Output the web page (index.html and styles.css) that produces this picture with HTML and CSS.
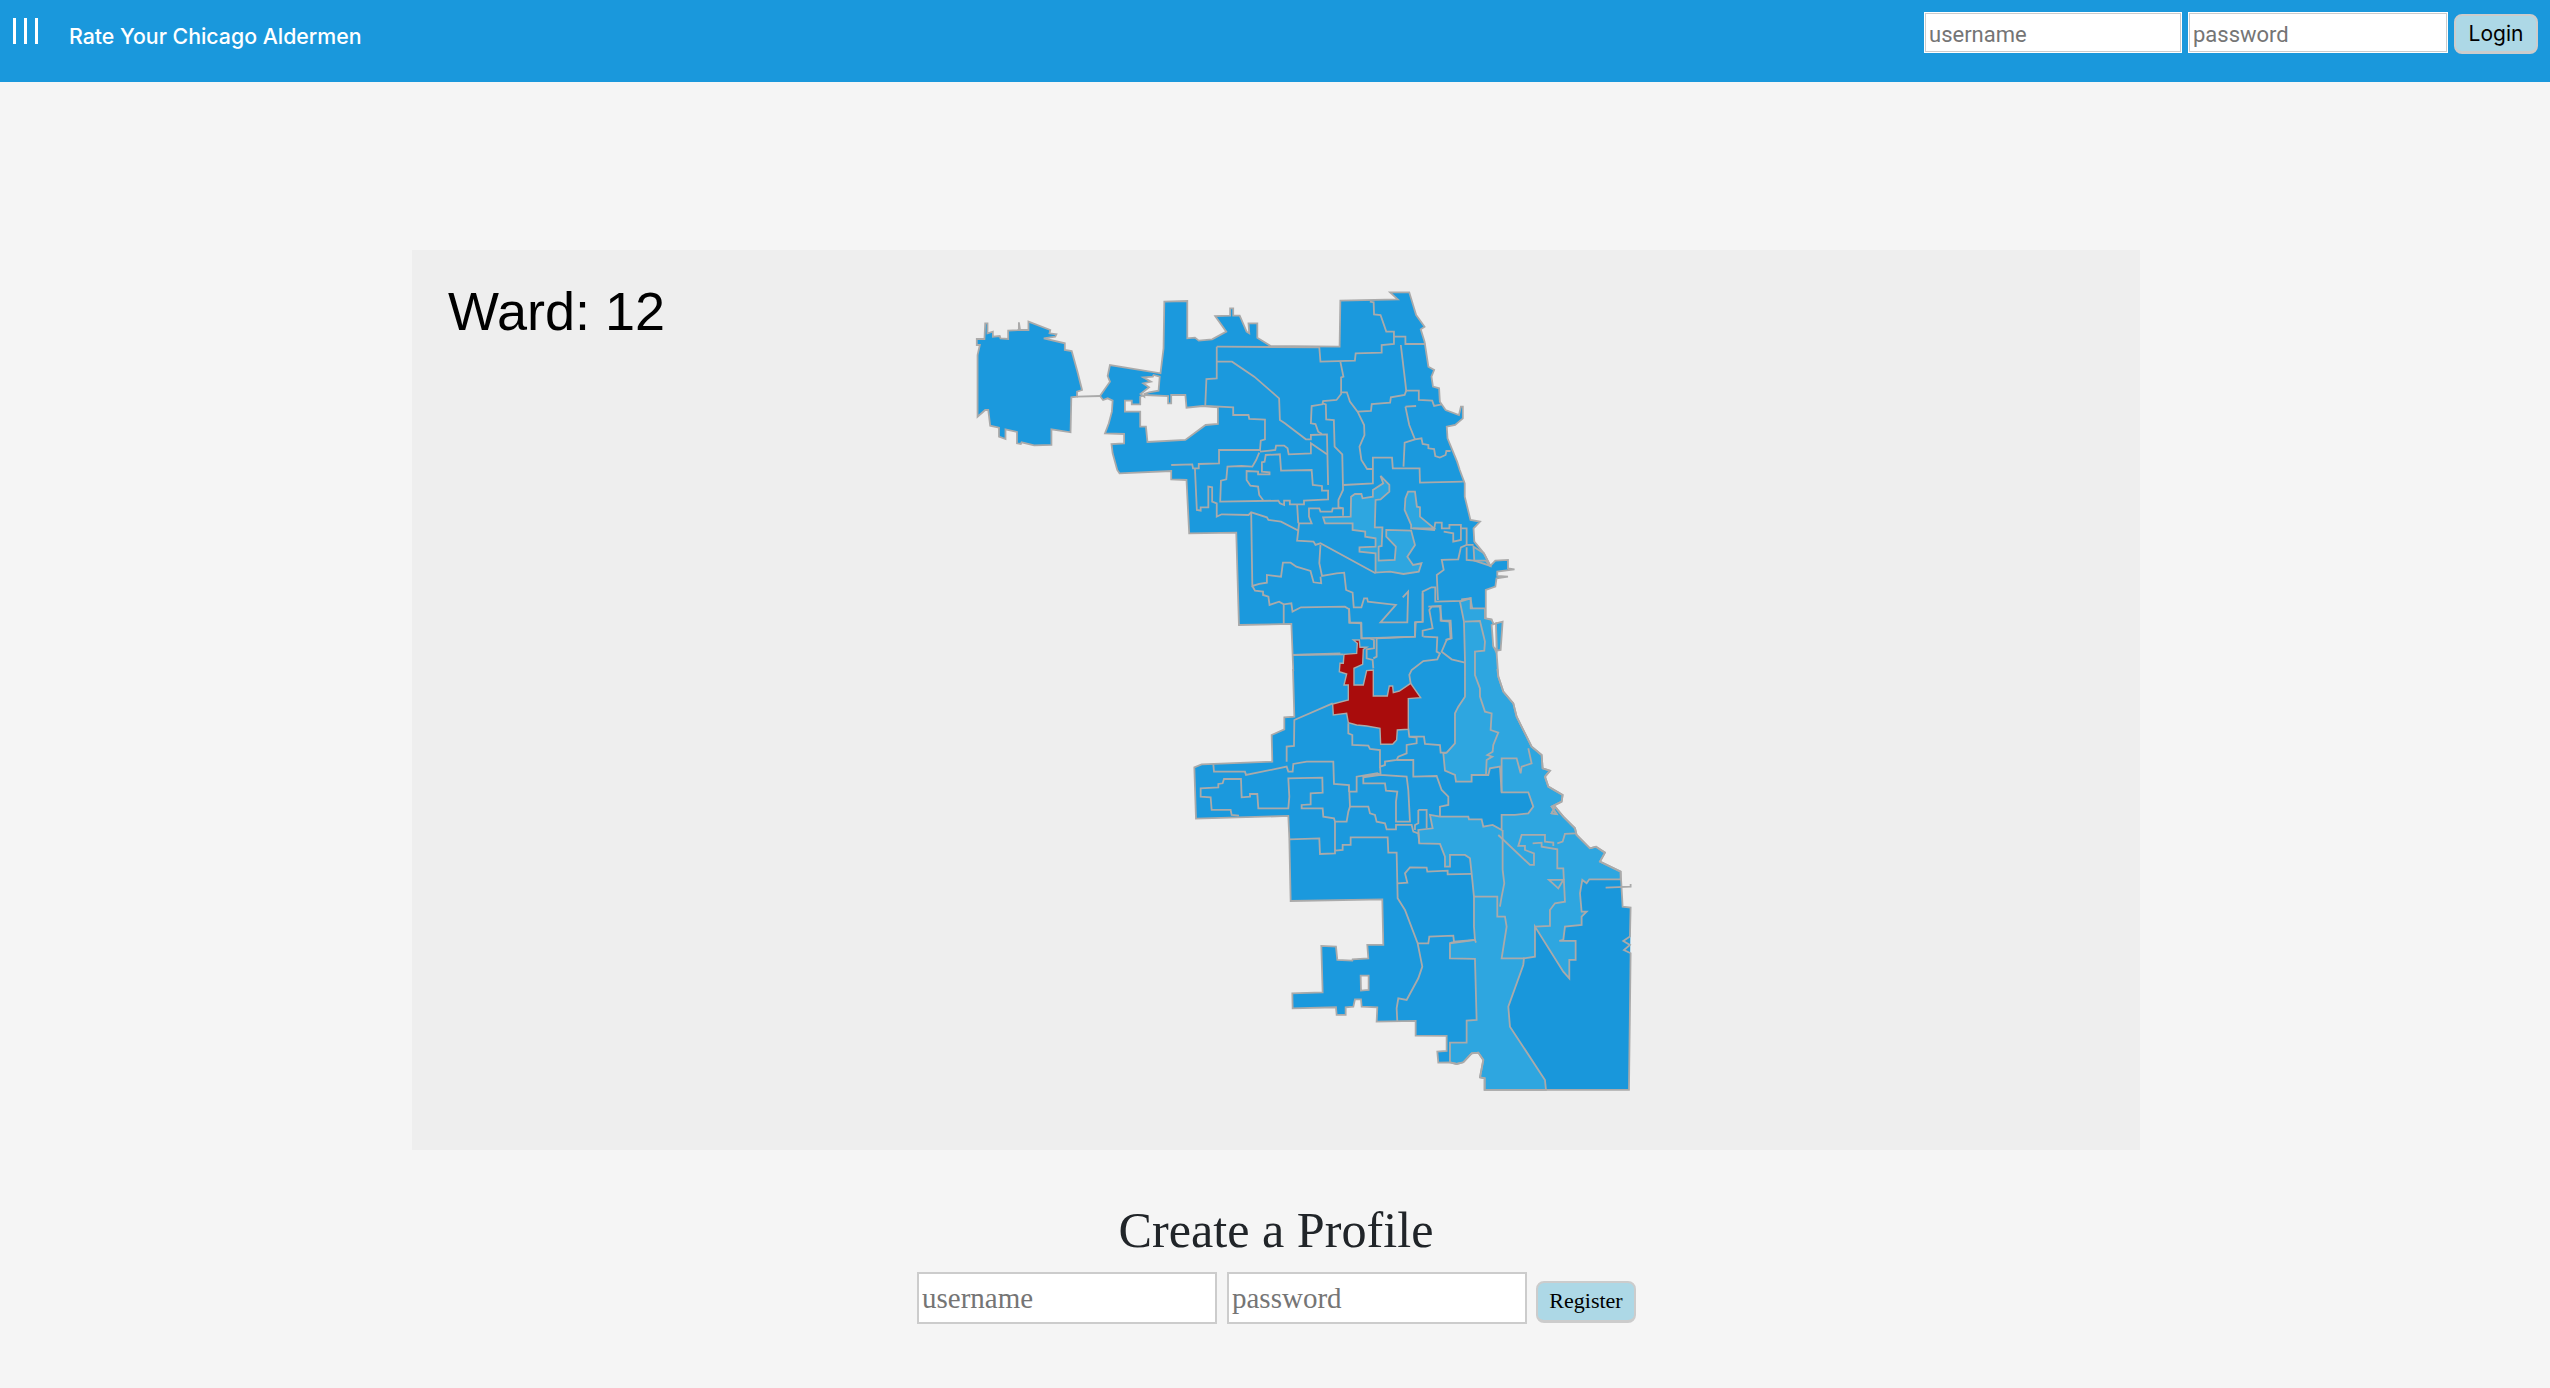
FILE: index.html
```html
<!DOCTYPE html>
<html lang="en">
<head>
    <meta charset="UTF-8">
    <title>Rate Your Chicago Aldermen</title>
    <link rel="stylesheet" href="styles.css">
</head>
<body>

<header class="topbar">
    <div class="brand">
        <div class="menu-icon"><span></span><span></span><span></span></div>
        <span class="brand-name">Rate Your Chicago Aldermen</span>
    </div>
    <form class="login">
        <input type="text" class="login-input" placeholder="username">
        <input type="password" class="login-input" placeholder="password">
        <button type="button" class="login-btn">Login</button>
    </form>
</header>

<main class="content">
    <section class="map-panel">
        <div class="ward-label">Ward: 12</div>
        <svg class="map" viewBox="412 250 1728 900" xmlns="http://www.w3.org/2000/svg">
            <defs>
                <path id="ohare" d="M72 440L72 255L78 225L70 225L70 207L90 207L92 160L98 160L98 190L112 185L112 200L130 198L132 205L152 207L152 182L180 180L180 157L183 180L205 180L205 155L262 180L260 190L278 193L275 200L245 205L300 220L300 240L318 243L333 305L345 360L332 365L332 380L317 382L315 487L265 478L265 525L220 526L187 517L185 522L175 520L175 486L145 478L145 507L128 500L128 473L105 467L100 420L92 420Z"/>
                <path id="north-edge" d="M897 1203L892 1062L755 1065L748 788L625 790L618 630L578 628L578 603L443 610L437 600L425 550L422 522L455 520L455 492L405 490L415 460L423 425L425 392L412 385L400 390L392 378L418 335L412 318L418 285L550 310L558 235L560 95L620 93L620 205L640 203L650 212L685 208L722 185L693 138L732 137L732 115L740 115L740 137L757 137L775 185L782 190L780 160L803 160L803 203L838 228L1018 230L1020 92L1170 88L1150 67L1200 67L1218 135L1240 170L1230 178L1240 215L1250 290L1265 300L1258 320L1262 350L1278 355L1280 395L1295 420L1330 435L1335 410L1340 410L1340 445L1320 465L1298 470L1300 505L1325 575L1332 600L1345 640L1345 680L1360 750L1385 755L1368 775L1370 815L1395 850L1412 888L1425 872L1458 870L1458 895L1475 898L1430 905L1430 918L1458 920L1428 925L1425 950L1400 960L1400 1045L1415 1048L1420 1070L1425 1140L1430 1203"/>
                <path id="south-edge" d="M429 327L433 470L403 472L403 508L365 525L367 605L155 613L133 622L138 776L415 768L418 835L422 1023L697 1018L700 1155L652 1155L655 1195L608 1198L607 1202L562 1200L558 1160L514 1158L518 1297L427 1300L428 1345L558 1342L560 1365L587 1365L587 1342L610 1340L615 1318L633 1318L635 1340L682 1342L680 1385L797 1383L797 1427L890 1428L890 1473L862 1475L865 1508L900 1507L920 1512L940 1507L965 1480L985 1478L1000 1500L990 1552L1004 1555L1004 1590L1437 1590L1442 1180L1422 1170L1440 1155L1420 1143L1440 1130L1442 1043L1418 1040L1412 935L1350 905L1365 878L1338 860L1320 865L1280 825L1275 805L1240 770L1215 740L1205 760L1220 762L1205 740L1235 725L1238 705L1195 680L1185 650L1200 632L1178 625L1175 585L1145 560L1130 530L1100 470L1090 430L1060 395L1045 350L1042 327"/>
            </defs>

            <!-- land fills -->
            <g transform="translate(950 270) scale(.3827 .3333)">
                <use href="#ohare" class="land"/>
                <use href="#north-edge" class="land"/>
            </g>
            <g transform="translate(1150 560) scale(.3333)">
                <use href="#south-edge" class="land"/>
                <path class="land-deep" d="M1160 1100L1240 1235L1258 1255L1258 1200L1277 1200L1277 1143L1228 1143L1240 1140L1245 1100L1295 1070L1295 1000L1297 960L1318 958L1412 958L1418 1040L1442 1043L1437 1590L1188 1590L1185 1560L1080 1400L1075 1340L1120 1215L1155 1190Z"/>
                <path class="land-deep" d="M860 650L885 632L915 645L918 665L965 665L965 645L1015 645L1020 625L1050 620L1055 697L1135 697L1150 740L1135 760L1095 765L1055 765L1055 800L1030 795L1000 800L995 775L955 770L870 770L870 740L895 735L895 710L875 690Z"/>
                <path class="land-deep" d="M743 970L772 968L765 940L780 922L830 923L832 935L893 932L893 943L965 942L972 1130L912 1145L910 1127L838 1130L835 1150L803 1150L765 1050L743 1015Z"/>
            </g>

            <!-- north side wards -->
            <g transform="translate(950 270) scale(.3827 .3333)">
                <path class="light" d="M1125 618L1148 645L1148 665L1125 688L1112 690L1110 772L1130 772L1128 828L1120 830L1120 872L1162 870L1165 830L1140 800L1140 780L1205 782L1215 825L1195 860L1210 885L1232 880L1225 905L1185 912L1150 905L1112 908L1112 850L1070 845L1070 832L1112 830L1112 805L1085 800L1085 785L1052 780L1052 760L980 760L975 742L1047 740L1048 680L1058 672L1075 672L1078 685L1105 680L1105 660L1132 640Z"/>
                <path class="light" d="M1190 685L1197 665L1215 665L1220 710L1228 712L1228 740L1265 775L1205 775L1205 765L1188 720Z"/>
                <path class="light" d="M1368 830L1395 850L1412 888L1370 872Z"/>
                <path class="hole" d="M457 425L457 392L475 392L475 403L497 403L497 380L510 375L570 378L570 400L578 400L578 375L615 375L618 413L660 408L700 412L700 462L668 465L615 510L516 516L512 470L497 470L497 425Z"/>
                <path class="hole" d="M505 322L530 320L532 315L548 320L545 362L520 367L508 372L508 380L498 372L520 352L505 340L525 335Z"/>
                <use href="#ohare" class="ward"/>
                <use href="#north-edge" class="ward"/>
                <path class="ward" d="M332 380L392 378"/>
                <path class="ward" d="M697 230L965 232L968 275L1058 272L1060 250L1128 248L1128 225L1160 222L1160 185L1140 185L1125 135L1108 133L1107 97L1097 95"/>
                <path class="ward" d="M1160 200L1190 200L1190 222L1242 222M1178 225L1190 340L1192 362L1225 362L1225 390L1260 392L1265 408L1285 403"/>
                <path class="ward" d="M697 230L697 325L670 327L667 408L740 412L740 435L780 435L782 447L823 449L823 508L812 512L810 540L703 540L703 580L650 582L650 595L635 595L633 583L578 585"/>
                <path class="ward" d="M697 275L737 275L795 320L860 385L862 450L875 460L930 508L943 508L943 495L985 493L988 645"/>
                <path class="ward" d="M1020 275L1028 320L1022 322L1022 372L1010 390L975 393L973 403L945 408L943 460L955 462L962 485L972 492"/>
                <path class="ward" d="M973 400L982 403L983 448L1003 450L1005 530L1025 553L1027 660L1015 690L1015 712L1027 715L1027 737"/>
                <path class="ward" d="M1022 367L1037 367L1045 395L1065 425L1082 465L1083 495L1070 530L1075 570L1090 597L1105 597"/>
                <path class="ward" d="M1065 425L1100 423L1102 402L1150 398L1152 382L1188 375L1192 362"/>
                <path class="ward" d="M1190 410L1218 408M1190 410L1200 465L1215 508L1188 518L1185 590M1215 508L1232 505L1235 522L1250 525L1250 535L1265 537L1268 558L1280 563L1295 555L1297 543L1308 543"/>
                <path class="ward" d="M1105 597L1105 563L1155 563L1157 595L1227 595L1228 638L1340 635M1105 597L1105 640L1028 645"/>
                <path class="ward" d="M810 545L850 540L852 527L873 527L882 535L885 553L943 550L943 520L985 553"/>
                <path class="ward" d="M808 548L800 570L790 590L762 588L725 590L722 628L708 632L706 695L858 692L862 700L873 705L873 692L888 692L888 703L925 703L925 692L988 688L988 662L972 662L972 648L948 645L945 600L865 602L862 553L825 555L822 575L815 577L815 605L835 607L835 613L805 613L805 605L775 603L775 630L785 647L805 650L808 675L818 690"/>
                <path class="ward" d="M640 595L645 720L655 722L655 712L675 712L675 650L685 652L685 695L697 700L697 740L710 733L780 735L787 727L828 742L832 750L865 755L910 782L912 760L945 760L938 740L938 715L965 715L968 725L998 725L1000 715L1027 715"/>
                <path class="ward" d="M907 703L910 760M910 782L907 812L950 815L955 825L968 820L1112 910M968 825L965 880L972 918L1010 910L1030 908L1035 960L1052 968L1055 1012L1075 1012L1082 985L1090 985L1092 995L1165 1005L1125 1057L1195 1057L1197 965L1183 982"/>
                <path class="ward" d="M787 727L790 948L808 942L828 938L828 915L865 920L870 878L890 878L905 890L942 903L950 937L970 940L968 920"/>
                <path class="ward" d="M790 948L797 962L818 965L818 975L832 980L835 1005L860 995L872 1003L892 1000L895 1025L917 1012L1032 1010L1043 1018L1043 1058L1075 1060L1075 1105L1215 1100L1217 1057L1235 1055L1235 965L1258 952L1268 952L1268 995L1338 993L1338 988L1360 985L1365 1018L1400 1018M872 1003L872 1062"/>
                <path class="ward" d="M895 1155L1020 1150"/>
                <path class="ward" d="M1275 990L1272 915L1290 900L1285 870L1328 868L1335 832L1350 825L1368 825M1350 832L1350 870L1370 872L1400 872L1412 888"/>
                <path class="ward" d="M1210 775L1265 780L1268 758L1285 758L1285 775L1305 775L1305 765L1335 765L1335 810L1315 815L1315 790L1290 785M1335 775L1350 775L1350 825"/>
                <path class="ward" d="M1250 1010L1282 1008L1282 1052L1305 1055L1308 1105L1295 1110"/>
            </g>

            <!-- south side wards -->
            <g transform="translate(1150 560) scale(.3333)">
                <path class="light" d="M930 125L942 185L945 300L945 410L925 440L915 460L915 550L890 578L880 580L885 632L915 645L918 665L965 665L965 645L1015 645L1020 625L1050 620L1055 697L1135 697L1150 740L1135 760L1095 765L1055 765L1055 810L1028 795L1000 800L995 778L957 778L955 770L870 770L840 765L848 805L805 810L808 850L870 852L885 890L885 920L900 920L900 885L945 885L960 895L965 940L972 1010L972 1100L975 1140L900 1150L900 1195L975 1197L980 1380L950 1382L950 1448L900 1448L900 1507L920 1512L940 1507L965 1480L985 1478L1000 1500L990 1552L1004 1555L1004 1590L1188 1590L1185 1560L1080 1400L1075 1340L1120 1215L1122 1195L1155 1190L1155 1100L1240 1235L1258 1255L1258 1200L1277 1200L1277 1143L1228 1143L1240 1140L1245 1100L1295 1095L1295 1070L1310 1055L1295 1055L1290 1000L1297 960L1310 970L1318 958L1412 958L1412 935L1350 905L1365 878L1338 860L1320 865L1280 825L1275 805L1240 770L1215 740L1205 760L1220 762L1205 740L1235 725L1238 705L1195 680L1185 650L1200 632L1178 625L1175 585L1145 560L1130 530L1100 470L1090 430L1060 395L1045 350L1040 280L1030 255L1030 190L1025 180L1005 175L1005 145L962 145L962 115Z"/>
                <path class="light" d="M1038 190L1058 185L1052 270L1040 272Z"/>
                <path class="hole" d="M1025 195L1038 190L1040 272L1030 260Z"/>
                <path class="hole" d="M632 1247L656 1247L656 1290L633 1292Z"/>
                <use href="#south-edge" class="ward"/>
                <path class="ward" d="M1367 983L1442 980L1442 972"/>
                <path class="ward" d="M428 285L580 283"/>
                <path class="ward" d="M597 145L600 188L633 188L635 235L660 235L672 240L672 265L650 268L650 295L668 300L670 325"/>
                <path class="ward" d="M680 235L795 230L795 187L818 185L818 100M680 235L680 290L670 295"/>
                <path class="ward" d="M820 230L862 232L860 275L870 280L862 298L820 303L785 330L778 345L782 370"/>
                <path class="ward" d="M845 140L870 140L875 182L902 182L905 235L890 240L875 275L905 298L945 308M845 140L838 150L848 205L818 212L818 230"/>
                <path class="ward" d="M775 505L778 530L800 533L800 550L770 555L770 580L745 590L740 600L705 605L705 615L690 620L690 570L660 567L655 557L607 555L607 525L595 520L595 490"/>
                <path class="ward" d="M778 530L822 530L825 552L870 555L872 578L890 578"/>
                <path class="ward" d="M740 600L790 600L790 650L860 648L875 690L895 710L895 735L870 740L870 770"/>
                <path class="ward" d="M690 620L692 645L770 650L775 690L780 785L738 785L738 725L742 695L708 692L705 670L640 670L640 652L690 645L682 640L620 650L620 695L598 695L600 740L595 755L590 785L555 785L552 775L520 770L518 745L455 745L455 735L482 733L482 700L518 698L517 653L415 655L418 710L415 745L325 745L322 702L300 702L300 710L275 712L273 657L222 657L218 670L205 672L205 682L152 685L152 710L182 712L185 750L242 750L245 765L267 767"/>
                <path class="ward" d="M190 613L192 635L285 635L288 645L410 620L415 635L428 635L430 612L470 605L550 605L552 672L597 675L597 695"/>
                <path class="ward" d="M410 605L410 560L432 558L433 480L548 430"/>
                <path class="ward" d="M598 740L655 740L660 760L675 765L680 785L705 790L710 808L738 808L738 795L785 795L790 815L805 820L808 850"/>
                <path class="ward" d="M805 750L830 750L830 805M805 750L805 790L795 795L795 810"/>
                <path class="ward" d="M555 785L555 880L510 882L508 835L418 838M555 872L578 870L578 855L602 855L602 832L713 832L715 878L740 878L743 1015L765 1050L803 1150L817 1220L805 1255L770 1320L745 1315L740 1345L742 1385"/>
                <path class="ward" d="M743 970L772 968L765 940L780 922L830 923L832 935L893 932L893 943L965 942"/>
                <path class="ward" d="M803 1150L835 1150L838 1130L910 1127L912 1145L975 1140L978 1148M912 1145L900 1150"/>
                <path class="ward" d="M972 1010L1042 1010L1042 1070L1065 1070L1070 1100L1055 1195L1122 1195"/>
                <path class="ward" d="M1058 810L1058 930L1063 970L1055 1010L1050 1040"/>
                <path class="ward" d="M1045 825L1140 915L1152 915L1152 880L1125 870L1125 858L1105 858L1115 825L1185 825L1185 845L1210 848L1210 858"/>
                <path class="ward" d="M1148 850L1175 848L1175 860L1222 868L1222 925L1240 925L1245 1025L1215 1030L1200 1050L1200 1098L1155 1100"/>
                <path class="ward" d="M1278 820L1245 822L1238 845L1222 850"/>
                <path class="ward" d="M1197 960L1240 960L1225 985Z"/>
                <path class="ward" d="M1135 565L1145 610L1115 620L1112 640L1100 595L1055 595L1055 697"/>
                <path class="ward" d="M945 185L990 183L1005 245L1003 272L975 275L975 345L990 385L990 410L1005 455L1025 460L1022 510L1045 518L1030 555L1028 575L1012 585L1027 590L1010 600L1008 645"/>
                <path class="selected" d="M610 240L628 240L630 262L650 262L640 268L638 313L612 325L612 375L640 375L650 332L670 330L670 408L712 408L718 378L728 378L730 398L748 393L782 370L812 413L775 416L775 508L742 510L740 540L728 553L692 553L690 505L650 498L620 495L595 488L590 460L550 465L548 432L595 420L595 375L582 375L590 342L568 335L570 310L580 310L582 283L620 280L622 250Z"/>
            </g>
        </svg>
    </section>

    <section class="signup">
        <h2 class="signup-title">Create a Profile</h2>
        <form class="signup-form">
            <input type="text" class="signup-input" placeholder="username">
            <input type="password" class="signup-input" placeholder="password">
            <button type="button" class="signup-btn">Register</button>
        </form>
    </section>
</main>

</body>
</html>
```

FILE: styles.css
```css
* {
    box-sizing: border-box;
}
body {
    margin: 0;
    height: 1388px;
    overflow: hidden;
    background-color: #f5f5f5;
    font-family: "Liberation Serif", serif;
}

/* top bar */
.topbar {
    display: flex;
    justify-content: space-between;
    height: 82px;
    padding: 12px 12px 0 13px;
    background-color: #1a98dc;
}
.brand {
    display: flex;
    align-items: flex-start;
}
.menu-icon {
    display: flex;
    gap: 8.5px;
    margin-top: 6px;
}
.menu-icon span {
    width: 2.5px;
    height: 26px;
    background-color: #fff;
}
.brand-name {
    margin: 10px 0 0 31.5px;
    font-family: Inter, sans-serif;
    font-size: 21.3px;
    font-weight: 500;
    line-height: 28px;
    color: #fff;
}
.login {
    display: flex;
    align-items: flex-start;
    gap: 6px;
}
.login-input {
    width: 258px;
    height: 41px;
    padding: 3px 3px 0;
    border: 2px solid #ccc;
    outline: 1px solid #fff;
    outline-offset: -1px;
    background-color: #fff;
    font-family: Roboto, sans-serif;
    font-size: 22px;
}
.login-input + .login-input {
    width: 260px;
}
.login-btn {
    width: 84px;
    height: 40px;
    margin-top: 2px;
    padding: 0;
    border: 2px solid #ccc;
    border-bottom-width: 3px;
    border-radius: 8px;
    background-color: #add8e6;
    font-family: Inter, sans-serif;
    font-size: 21px;
    color: #000;
}

/* map */
.content {
    padding: 168px 0 0 2px;
}
.map-panel {
    position: relative;
    width: 1728px;
    height: 900px;
    margin: 0 auto;
    background-color: #eee;
}
.ward-label {
    position: absolute;
    top: 31px;
    left: 36px;
    font-family: "Liberation Sans", sans-serif;
    font-size: 54px;
    line-height: 61px;
    color: #000;
}
.map {
    display: block;
    width: 1728px;
    height: 900px;
}
.map defs path {
    vector-effect: non-scaling-stroke;
}
.land {
    fill: #1b99dd;
    stroke: none;
}
.land-deep {
    fill: #1997db;
}
.light {
    fill: #2ea6e0;
    stroke: #aaa;
    stroke-width: 1.8px;
    vector-effect: non-scaling-stroke;
}
.hole {
    fill: #eee;
    stroke: #aaa;
    stroke-width: 1.8px;
    vector-effect: non-scaling-stroke;
}
.ward {
    fill: none;
    stroke: #aaa;
    stroke-width: 1.8px;
    vector-effect: non-scaling-stroke;
}
.selected {
    fill: #a90c0c;
    stroke: #aaa;
    stroke-width: 1.4px;
    vector-effect: non-scaling-stroke;
}

/* register form */
.signup {
    text-align: center;
}
.signup-title {
    margin: 49px 0 0;
    font-size: 50.2px;
    font-weight: 400;
    line-height: 62px;
    color: #212529;
}
.signup-form {
    display: flex;
    justify-content: center;
    align-items: flex-end;
    gap: 10px;
    margin-top: 11px;
    padding-left: 1px;
}
.signup-input {
    width: 300px;
    height: 52px;
    padding: 0 3px;
    border: 2px solid #ccc;
    background-color: #fff;
    font-family: "Liberation Serif", serif;
    font-size: 29px;
}
.signup-btn {
    width: 100px;
    height: 42px;
    margin: 0 0 1px -1px;
    padding: 0 0 2px;
    border: 2px solid #ccc;
    border-bottom-width: 3px;
    border-radius: 8px;
    background-color: #add8e6;
    font-family: "Liberation Serif", serif;
    font-size: 22px;
    color: #000;
}
```
